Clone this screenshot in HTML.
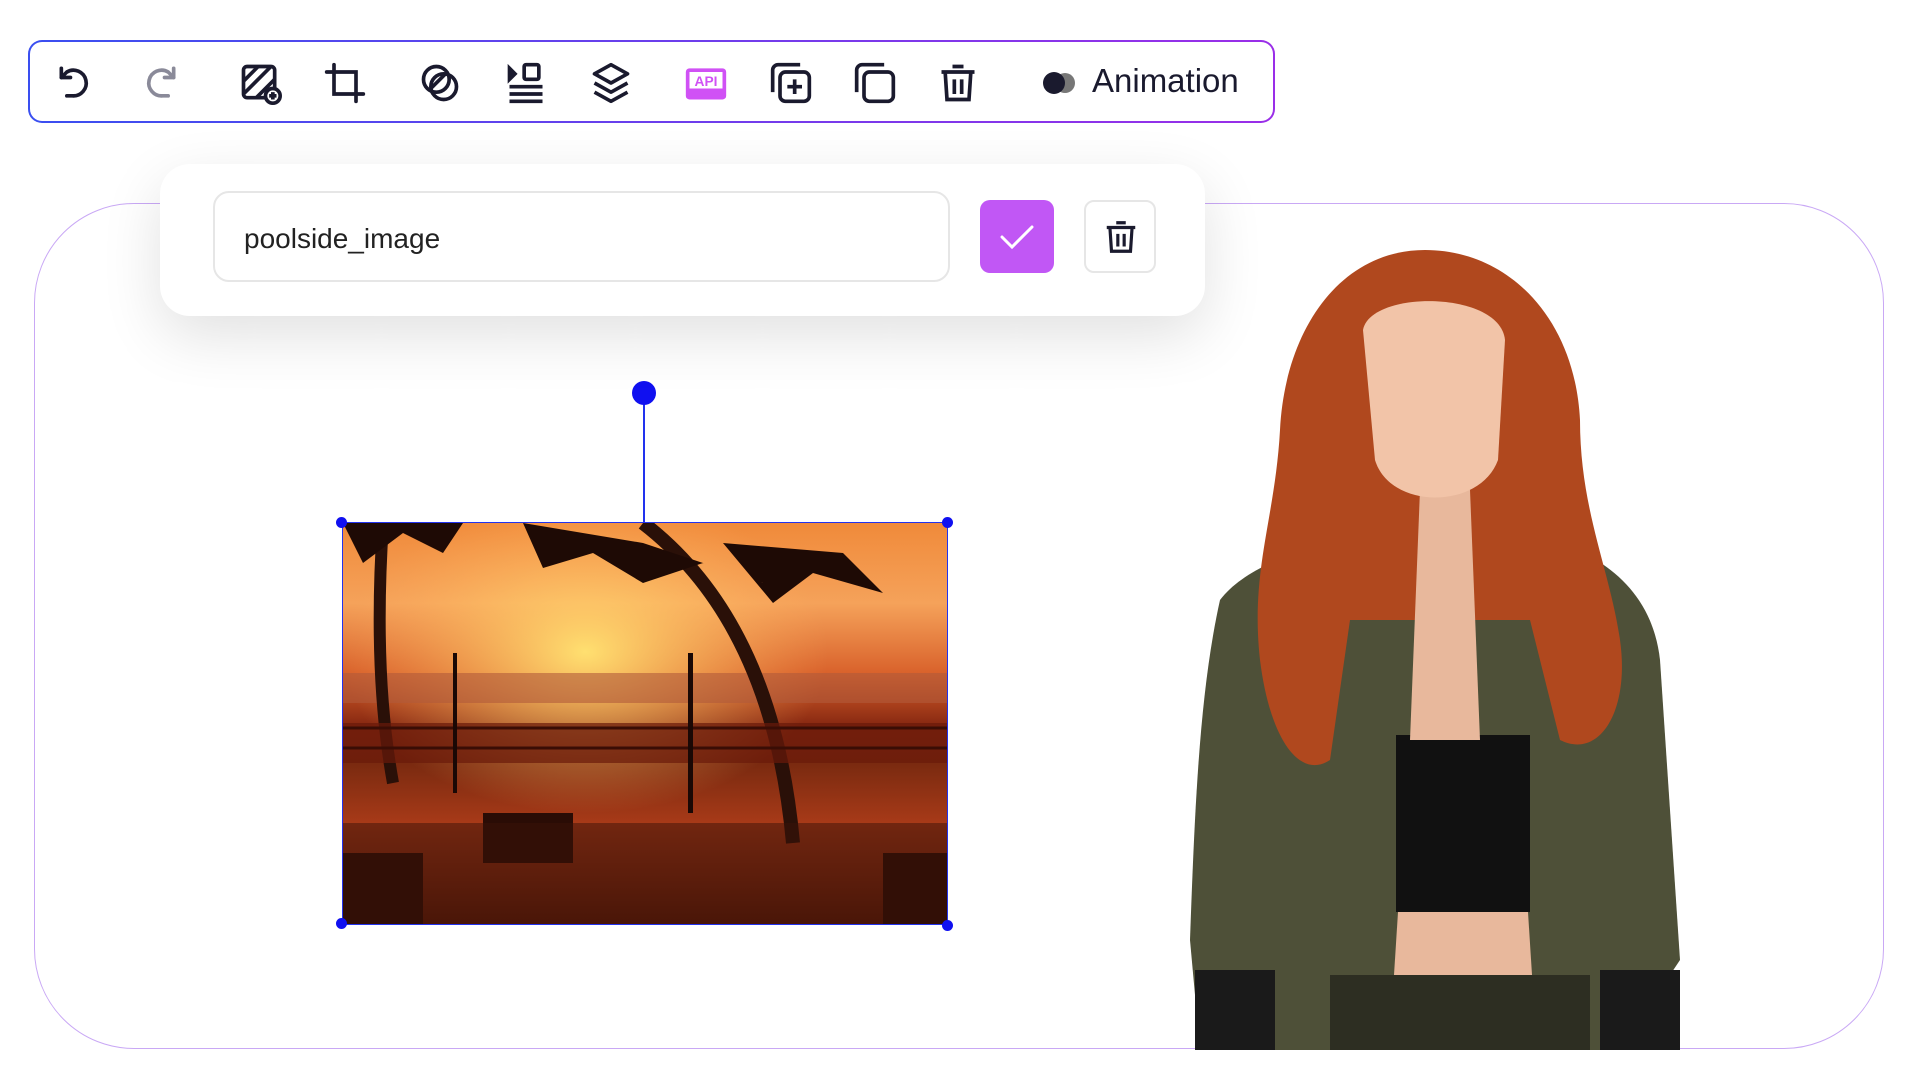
<!DOCTYPE html>
<html><head><meta charset="utf-8"><style>
*{box-sizing:border-box;margin:0;padding:0}
body{width:1920px;height:1080px;background:#fff;position:relative;overflow:hidden;font-family:"Liberation Sans",sans-serif}
.tb{position:absolute;left:28px;top:40px;width:1247px;height:83px;border-radius:14px;padding:2px;background:linear-gradient(90deg,#3a4ff0,#9a2ee8)}
.tb .in{width:100%;height:100%;background:#fff;border-radius:12px;position:relative}
.ic{position:absolute;top:19px;width:44px;height:44px}
.canvas{position:absolute;left:34px;top:203px;width:1850px;height:846px;border:1.5px solid #c9a8f5;border-radius:100px}
.card{position:absolute;left:160px;top:164px;width:1045px;height:152px;background:#fff;border-radius:30px;box-shadow:0 20px 60px rgba(0,0,0,.12)}
.input{position:absolute;left:53px;top:27px;width:737px;height:91px;border:2px solid #e6e6e6;border-radius:16px;font-size:28px;color:#222;padding:30px 0 0 29px}
.ok{position:absolute;left:820px;top:36px;width:74px;height:73px;background:#c157f5;border-radius:10px}
.del{position:absolute;left:924px;top:36px;width:72px;height:73px;border:2px solid #e6e6e6;border-radius:10px}
.photo{position:absolute;left:342px;top:522px;width:606px;height:403px;overflow:hidden;border:1px solid #2233ee;
background:linear-gradient(180deg,#f08a3a 0%,#f5a25a 20%,#d8602a 38%,#8a2a12 50%,#7a2a10 60%,#a83a18 75%,#5a1a08 100%)}
.h{position:absolute;width:11px;height:11px;border-radius:50%;background:#1010f0}
</style></head><body>
<div class="tb"><div class="in">
<svg class="ic" style="left:24px" viewBox="0 0 24 24" fill="none" stroke="#1a1a2e" stroke-width="2" stroke-linecap="round" stroke-linejoin="round"><path d="M4 4v5h5"/><path d="M4 9l3-3a7 7 0 1 1 3 13H7"/></svg>
<svg class="ic" style="left:107px" viewBox="0 0 24 24" fill="none" stroke="#8a8a99" stroke-width="2" stroke-linecap="round" stroke-linejoin="round"><path d="M20 4v5h-5"/><path d="M20 9l-3-3a7 7 0 1 0-3 13h3"/></svg>
<svg class="ic" style="left:208px" viewBox="0 0 24 24" fill="none" stroke="#1a1a2e" stroke-width="2"><rect x="3" y="3" width="17" height="17" rx="2"/><path d="M3 11l8-8M3 18l15-15M10 20l10-10"/><circle cx="19" cy="19" r="4" fill="#fff"/><path d="M19 17v4M17 19h4"/></svg>
<svg class="ic" style="left:293px" viewBox="0 0 24 24" fill="none" stroke="#1a1a2e" stroke-width="2" stroke-linecap="round"><path d="M6 2v16h16"/><path d="M2 6h16v16"/></svg>
<svg class="ic" style="left:388px" viewBox="0 0 24 24" fill="none" stroke="#1a1a2e" stroke-width="2"><circle cx="10" cy="10" r="7"/><circle cx="14" cy="14" r="7"/><path d="M7 15l8-8"/></svg>
<svg class="ic" style="left:474px" viewBox="0 0 24 24" fill="none" stroke="#1a1a2e" stroke-width="2"><rect x="11" y="2" width="8" height="8" rx="1"/><path d="M3 4l3 3-3 3z" fill="#1a1a2e"/><path d="M3 14h18M3 18h18M3 22h18"/></svg>
<svg class="ic" style="left:559px" viewBox="0 0 24 24" fill="none" stroke="#1a1a2e" stroke-width="2" stroke-linejoin="round"><path d="M12 2l9 5-9 5-9-5z"/><path d="M3 12l9 5 9-5M3 17l9 5 9-5"/></svg>
<svg class="ic" style="left:654px" viewBox="0 0 24 24"><rect x="1" y="4" width="22" height="17" rx="2" fill="#d051f5"/><rect x="3" y="6" width="18" height="9" fill="#fff"/><text x="12" y="13.5" font-size="7.5" font-weight="bold" text-anchor="middle" fill="#d051f5" font-family="Liberation Sans">API</text></svg>
<svg class="ic" style="left:739px" viewBox="0 0 24 24" fill="none" stroke="#1a1a2e" stroke-width="2"><rect x="6" y="6" width="16" height="16" rx="3"/><path d="M2 17V5a3 3 0 0 1 3-3h12M14 10v8M10 14h8"/></svg>
<svg class="ic" style="left:823px" viewBox="0 0 24 24" fill="none" stroke="#1a1a2e" stroke-width="2"><rect x="6" y="6" width="16" height="16" rx="3"/><path d="M2 17V5a3 3 0 0 1 3-3h12"/></svg>
<svg class="ic" style="left:906px" viewBox="0 0 24 24" fill="none" stroke="#1a1a2e" stroke-width="2"><path d="M3 6h18M9 3h6M5 6l1 15h12l1-15M10 10v8M14 10v8"/></svg>
<svg style="position:absolute;left:1008px;top:27px" width="40" height="28" viewBox="0 0 40 28"><circle cx="27" cy="14" r="10" fill="#777"/><circle cx="16" cy="14" r="11" fill="#1a1a2e"/></svg>
<div style="position:absolute;left:1062px;top:20px;font-size:33px;color:#1a1a2e">Animation</div>
</div></div>

<div class="canvas"></div>

<div style="position:absolute;left:643px;top:392px;width:1.5px;height:130px;background:#2233ee"></div>
<div style="position:absolute;left:632px;top:381px;width:24px;height:24px;border-radius:50%;background:#1010f0"></div>

<div class="photo">
<svg width="606" height="403" viewBox="0 0 606 403" style="position:absolute;left:0;top:0">
<defs><radialGradient id="sun" cx="0.4" cy="0.32" r="0.4"><stop offset="0" stop-color="#ffe070"/><stop offset="1" stop-color="#ffb060" stop-opacity="0"/></radialGradient></defs>
<rect width="606" height="403" fill="url(#sun)"/>
<rect y="150" width="606" height="30" fill="#b05a3a" opacity=".6"/>
<path d="M40 0 Q30 150 50 260" stroke="#2a1008" stroke-width="12" fill="none"/>
<path d="M300 0 Q430 100 450 320" stroke="#2a1008" stroke-width="14" fill="none"/>
<path d="M0 0 L120 0 L100 30 L60 10 L20 40z M180 0 L300 20 L420 60 L360 40 L300 60 L250 30 L200 45z M380 20 L500 30 L540 70 L470 50 L430 80z" fill="#1e0a05"/>
<rect x="0" y="200" width="606" height="40" fill="#6a1a0a" opacity=".7"/>
<path d="M0 205 H606 M0 225 H606" stroke="#3a0d05" stroke-width="3"/>
<rect x="110" y="130" width="4" height="140" fill="#1a0805"/><rect x="345" y="130" width="5" height="160" fill="#1a0805"/>
<path d="M140 290 h90 v50 h-90z M0 330 h80 v73 h-80z M540 330 h66 v73 h-66z" fill="#2a0c05"/>
<rect y="300" width="606" height="103" fill="#3a1208" opacity=".5"/>
</svg>
</div>
<div class="h" style="left:336px;top:517px"></div><div class="h" style="left:942px;top:517px"></div>
<div class="h" style="left:336px;top:918px"></div><div class="h" style="left:942px;top:920px"></div>

<!-- woman -->
<svg style="position:absolute;left:1180px;top:240px" width="520" height="810" viewBox="0 0 520 810">
<path d="M40 360 C70 320 150 300 200 290 L330 290 C390 300 470 330 480 420 L500 720 L440 810 L110 810 L20 810 L10 700 C15 560 20 450 40 360z" fill="#4e5038"/>
<path d="M216 495 L350 495 L350 672 L216 672z" fill="#111"/>
<path d="M218 672 L348 672 L352 735 L214 735z" fill="#e8b89c"/>
<path d="M150 735 L410 735 L410 810 L150 810z" fill="#2d2e22"/>
<rect x="15" y="730" width="80" height="80" fill="#1a1a1a"/><rect x="420" y="730" width="80" height="80" fill="#1a1a1a"/>
<path d="M245 10 C160 10 105 90 100 190 C95 280 70 330 80 420 C90 500 120 540 150 520 L170 380 L350 380 L380 500 C420 520 450 470 440 400 C430 330 400 270 400 180 C395 80 330 10 245 10z" fill="#b0481e"/>
<path d="M240 250 L290 250 L300 500 L230 500z" fill="#e8b89c"/>
<path d="M183 90 C190 50 320 50 325 100 L318 220 C300 270 210 270 195 220z" fill="#f2c4a8"/>
</svg>

<div class="card">
<div class="input">poolside_image</div>
<div class="ok"><svg width="74" height="73" viewBox="0 0 74 73"><path d="M22 37l10 10 20-20" stroke="#fff" stroke-width="3" fill="none" stroke-linecap="round"/></svg></div>
<div class="del"><svg style="margin:16px 0 0 16px" width="38" height="38" viewBox="0 0 24 24" fill="none" stroke="#1a1a2e" stroke-width="2"><path d="M3 6h18M9 3h6M5 6l1 15h12l1-15M10 10v8M14 10v8"/></svg></div>
</div>
</body></html>
